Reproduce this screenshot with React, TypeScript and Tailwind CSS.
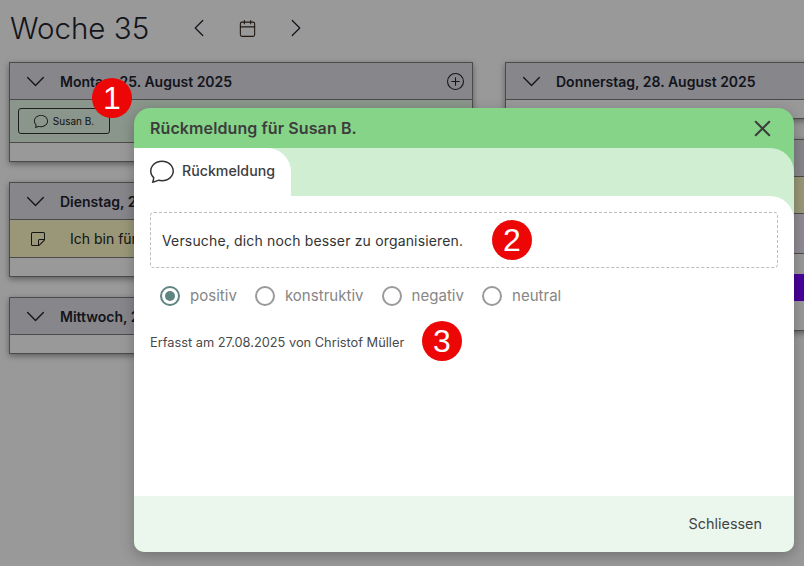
import { BsChat, BsChevronDown, BsChevronLeft, BsChevronRight, BsPlusCircle, BsSticky } from "react-icons/bs";
import { Calendar, X } from "lucide-react";
import type { ReactNode } from "react";

function DayHeader({ title, plus }: { title: string; plus?: boolean }) {
  return (
    <header className="flex h-[37px] items-center border-b border-[#7d7d7d] bg-[#dfe0e8] pl-[15px] pr-2">
      <BsChevronDown className="h-[21px] w-[21px] text-[#222]" />
      <h2 className="ml-[14px] text-[14px] font-semibold text-[#1f2430]">{title}</h2>
      {plus && <BsPlusCircle className="ml-auto h-[17px] w-[17px] text-[#222]" />}
    </header>
  );
}

function DayCard({ title, plus, children }: { title: string; plus?: boolean; children?: ReactNode }) {
  return (
    <section className="border border-[#7d7d7d] bg-white shadow-[0_2px_6px_rgba(0,0,0,0.4)]">
      <DayHeader title={title} plus={plus} />
      {children}
      <div className="h-[18px]" />
    </section>
  );
}

function Radio({ label, checked }: { label: string; checked?: boolean }) {
  return (
    <label className="flex items-center gap-[10px]">
      <span
        className={
          checked
            ? "flex h-5 w-5 items-center justify-center rounded-full border-2 border-[#5f8582]"
            : "h-5 w-5 rounded-full border-2 border-[#9a9a9a]"
        }
      >
        {checked && <span className="h-[10px] w-[10px] rounded-full bg-[#5f8582]" />}
      </span>
      <span className="text-[15px] tracking-[0.03px] text-[#868686]">{label}</span>
    </label>
  );
}

function Marker({ n, className }: { n: number; className: string }) {
  return (
    <div
      className={`absolute z-20 flex h-10 w-10 items-center justify-center rounded-full bg-[#ec0606] font-['Liberation_Sans',sans-serif] text-[32px] leading-none text-white ${className}`}
    >
      {n}
    </div>
  );
}

export default function App() {
  return (
    <div className="relative h-[566px] w-[804px] overflow-hidden bg-white font-['Inter',sans-serif]">
      {/* Wochenansicht */}
      <div className="w-[970px] px-[9px]">
        <div className="flex h-[62px] items-center pb-[6px] pl-px text-[#1f2430]">
          <h1 className="w-[179px] text-[29.5px] font-light">Woche 35</h1>
          <BsChevronLeft className="h-5 w-5" />
          <Calendar size={19} strokeWidth={1.4} className="ml-[29px] text-[#3a2a20]" />
          <BsChevronRight className="ml-[29px] h-5 w-5" />
        </div>

        <div className="grid grid-cols-[464px_464px] gap-x-8">
          <div className="flex flex-col gap-5">
            <DayCard title="Montag, 25. August 2025" plus>
              <div className="flex h-[43px] items-center border-b border-[#7d7d7d] bg-[#e6f8e8] pl-2">
                <button className="flex h-[26px] w-[92px] items-center justify-center gap-[5px] rounded-[3px] border border-[#333] text-[10px] text-[#222]">
                  <BsChat className="h-[14px] w-[14px]" />
                  Susan B.
                </button>
              </div>
            </DayCard>
            <DayCard title="Dienstag, 26. August 2025">
              <div className="flex h-[38px] items-center border-b border-[#7d7d7d] bg-[#fffcc8] pl-5 text-[14px] text-[#222]">
                <BsSticky className="h-4 w-4" />
                <span className="ml-6">Ich bin für</span>
              </div>
            </DayCard>
            <DayCard title="Mittwoch, 27. August 2025" />
          </div>

          <div className="flex flex-col gap-5">
            <DayCard title="Donnerstag, 28. August 2025" />
            <section className="border border-[#7d7d7d] bg-white shadow-[0_2px_6px_rgba(0,0,0,0.4)]">
              <DayHeader title="Freitag, 29. August 2025" />
              <div className="h-[37px] border-b border-[#7d7d7d] bg-[#fffcc8]" />
              <div className="h-[40px] border-b border-[#7d7d7d] bg-[#efe6f5]" />
              <div className="h-[20px]" />
              <div className="h-[27px] bg-[#7a00ff]" />
              <div className="h-[29px]" />
            </section>
          </div>
        </div>
      </div>

      {/* Abdunkelung */}
      <div className="absolute inset-0 z-10 bg-black/40" />

      <Marker n={1} className="left-[92px] top-[78px]" />
      <Marker n={2} className="left-[492px] top-[220px]" />
      <Marker n={3} className="left-[422px] top-[321px]" />

      {/* Dialog */}
      <div className="absolute left-[134px] top-[108px] z-10 flex h-[444px] w-[660px] flex-col overflow-hidden rounded-t-[16px] rounded-b-[10px] bg-[#85d488] text-[#3d3d3d] shadow-[0_4px_14px_rgba(0,0,0,0.25)]">
        <div className="flex h-10 shrink-0 items-center justify-between pl-4 pr-[18px]">
          <h3 className="text-[16px] font-semibold tracking-[0.1px]">Rückmeldung für Susan B.</h3>
          <X size={27} strokeWidth={1.8} />
        </div>
        <div className="flex h-12 shrink-0 rounded-tr-[24px] bg-[#cfeed2]">
          <div className="flex w-[157px] items-center gap-2 rounded-tr-[24px] bg-white pb-[2px] pl-4">
            <BsChat className="h-6 w-6 text-[#333]" />
            <span className="text-[14.2px] font-medium">Rückmeldung</span>
          </div>
        </div>
        <div className="flex min-h-0 flex-1 flex-col bg-[#cfeed2]">
          <div className="flex-1 rounded-tr-[24px] bg-white px-4 pt-4">
            <div className="flex h-[56px] items-center rounded-[4px] border border-dashed border-[#bdbdbd] pl-[11px] text-[14px] tracking-[0.16px] text-[#333]">
              Versuche, dich noch besser zu organisieren.
            </div>
            <div className="mt-[17px] flex gap-[18px] pl-[10px]">
              <Radio label="positiv" checked />
              <Radio label="konstruktiv" />
              <Radio label="negativ" />
              <Radio label="neutral" />
            </div>
            <p className="mt-[25px] text-[12.8px] text-[#4a4a4a]">Erfasst am 27.08.2025 von Christof Müller</p>
          </div>
        </div>
        <div className="flex h-14 shrink-0 items-center justify-end bg-[#ebf6ec] pr-8 text-[14.4px] text-[#444]">
          Schliessen
        </div>
      </div>
    </div>
  );
}
